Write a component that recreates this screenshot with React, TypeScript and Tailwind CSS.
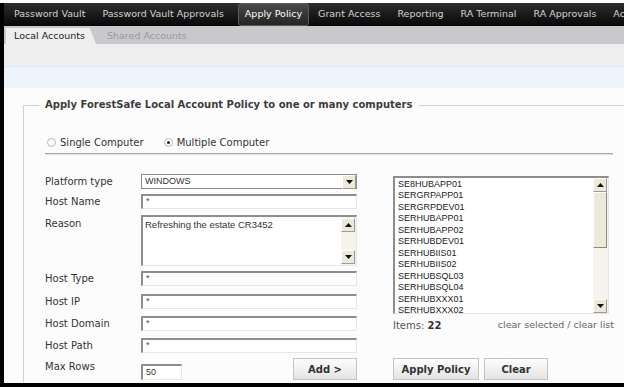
const navItems = [
  "Password Vault",
  "Password Vault Approvals",
  "Apply Policy",
  "Grant Access",
  "Reporting",
  "RA Terminal",
  "RA Approvals",
  "Access",
];

const hosts = [
  "SE8HUBAPP01",
  "SERGRPAPP01",
  "SERGRPDEV01",
  "SERHUBAPP01",
  "SERHUBAPP02",
  "SERHUBDEV01",
  "SERHUBIIS01",
  "SERHUBIIS02",
  "SERHUBSQL03",
  "SERHUBSQL04",
  "SERHUBXXX01",
  "SERHUBXXX02",
];

const sunken =
  "border border-t-2 border-l-2 border-t-[#8d8d8d] border-l-[#8d8d8d] border-r-[#e6e6e6] border-b-[#e6e6e6] bg-white";

const Arrow = ({ up }: { up?: boolean }) => (
  <div className="flex h-[14px] w-[14px] items-center justify-center border border-t-white border-l-white border-r-[#9a9a9a] border-b-[#9a9a9a] bg-[#ece9d8]">
    <svg width="7" height="4" viewBox="0 0 7 4">
      <path d={up ? "M0 4 L3.5 0 L7 4 Z" : "M0 0 L3.5 4 L7 0 Z"} fill="#111" />
    </svg>
  </div>
);

const Radio = ({ checked }: { checked?: boolean }) => (
  <span className="flex h-[9px] w-[9px] items-center justify-center rounded-full border border-[#b5b5b5] bg-white">
    {checked && <span className="h-[3px] w-[3px] rounded-full bg-[#222]" />}
  </span>
);

const TextRow = ({ label, value, top }: { label: string; value: string; top: string }) => (
  <div className={`flex items-center ${top}`}>
    <span className="w-[96px]">{label}</span>
    <div className={`${sunken} flex h-[15px] w-[216px] items-center pl-[3px] font-['Liberation_Sans'] text-[9px] text-[#444]`}>
      {value}
    </div>
  </div>
);

const Button = ({ label, width }: { label: string; width: string }) => (
  <div
    className={`${width} flex h-[22px] items-center justify-center border border-[#c4c4c4] bg-gradient-to-b from-[#fdfdfd] to-[#e4e4e4] text-[10px] font-bold text-[#333]`}
  >
    {label}
  </div>
);

export default function App() {
  return (
    <div className="h-[387px] w-[628px] overflow-hidden bg-white pr-[4px] pt-[3px] font-['DejaVu_Sans',sans-serif]">
      <div className="flex h-full flex-col border-b-4 border-l-4 border-black bg-white">
        {/* main nav */}
        <div className="flex h-[23px] items-center overflow-hidden bg-gradient-to-b from-[#2e2e2e] to-[#080808] pl-[10px] text-[9.5px] whitespace-nowrap text-[#d2d2d2]">
          {navItems.map((n) =>
            n === "Apply Policy" ? (
              <span
                key={n}
                className="mr-[9px] ml-[-3px] rounded-[3px] border border-[#5a5a5a] bg-gradient-to-b from-[#4a4a4a] to-[#252525] px-[6px] py-[3px] text-white"
              >
                {n}
              </span>
            ) : (
              <span key={n} className="mr-[17px]">
                {n}
              </span>
            )
          )}
        </div>
        {/* sub tabs */}
        <div className="flex h-[18px] items-end bg-[#c9c9cd] pl-[2px] text-[9.5px]">
          <div className="flex h-[16px] w-[90px] items-center bg-[#eeeeee] pl-[8px] text-[#222] [clip-path:polygon(0_0,93%_0,100%_100%,0_100%)]">
            Local Accounts
          </div>
          <div className="flex h-[16px] items-center pl-[11px] text-[#999999]">Shared Accounts</div>
        </div>
        <div className="h-[22px] bg-[#eeeeee]" />
        <div className="h-[22px] border-t border-[#dfe6ee] bg-[#eef4fb]" />
        {/* content */}
        <div className="flex-1 overflow-hidden bg-[#fcfcfc] pl-[19px] pt-[10px] text-[10px] text-[#333]">
          <fieldset className="h-[400px] border-t border-l border-[#d0d0d0] pl-[15px]">
            <legend className="px-[6px] text-[10px] leading-[14px] font-bold text-[#3c3c3c]">
              Apply ForestSafe Local Account Policy to one or many computers
            </legend>
            <div className="pl-[6px]">
              <div className="mt-[23px] flex h-[14px] items-center gap-[4px] pl-[2px]">
                <Radio />
                <span className="mr-[16px]">Single Computer</span>
                <Radio checked />
                <span>Multiple Computer</span>
              </div>
              <div className="mt-[4px] h-[2px] w-[568px] border-t border-b border-t-[#a8a8a8] border-b-[#e0e0e0]" />

              <div className="mt-[19px] flex">
                {/* left form */}
                <div className="w-[312px]">
                  <div className="flex items-center">
                    <span className="w-[96px]">Platform type</span>
                    <div className="flex h-[15px] w-[216px] items-center justify-between border border-[#8d8d8d] bg-white pl-[3px] font-['Liberation_Sans'] text-[9px] text-[#333]">
                      WINDOWS
                      <Arrow />
                    </div>
                  </div>
                  <TextRow label="Host Name" value="*" top="mt-[5px]" />
                  <div className="mt-[6px] flex items-start">
                    <span className="w-[96px] pt-[1px]">Reason</span>
                    <div className={`${sunken} flex h-[51px] w-[216px] justify-between`}>
                      <span className="pl-[2px] pt-[1px] font-['Liberation_Sans'] text-[9.5px] text-[#333]">
                        Refreshing the estate CR3452
                      </span>
                      <div className="flex flex-col justify-between bg-[#f4f3ee] pr-[1px] pb-[1px] pt-[1px]">
                        <Arrow up />
                        <Arrow />
                      </div>
                    </div>
                  </div>
                  <TextRow label="Host Type" value="*" top="mt-[5px]" />
                  <TextRow label="Host IP" value="*" top="mt-[8px]" />
                  <TextRow label="Host Domain" value="*" top="mt-[7px]" />
                  <TextRow label="Host Path" value="*" top="mt-[7px]" />
                  <div className="mt-[5px] flex items-start">
                    <span className="w-[96px] pt-[1px]">Max Rows</span>
                    <div className={`${sunken} mt-[6px] flex h-[16px] w-[41px] items-center pl-[3px] font-['Liberation_Sans'] text-[9px] text-[#333]`}>
                      50
                    </div>
                    <div className="ml-auto">
                      <Button label="Add >" width="w-[64px]" />
                    </div>
                  </div>
                </div>
                {/* right list */}
                <div className="mt-[2px] ml-[36px] w-[221px]">
                  <div className={`${sunken} flex h-[138px] w-[216px]`}>
                    <div className="flex-1 pl-[3px] pt-[1px] font-['Liberation_Sans'] text-[9px] leading-[11.45px] text-[#222]">
                      {hosts.map((h) => (
                        <div key={h}>{h}</div>
                      ))}
                    </div>
                    <div className="flex w-[15px] flex-col bg-[#f4f3ee]">
                      <Arrow up />
                      <div className="h-[56px] w-[14px] border border-t-white border-l-white border-r-[#8a8a8a] border-b-[#8a8a8a] bg-[#ece9d8]" />
                      <div className="flex-1" />
                      <Arrow />
                    </div>
                  </div>
                  <div className="mt-[4px] flex items-center justify-between text-[#555]">
                    <span>
                      Items: <b className="text-[#333]">22</b>
                    </span>
                    <span className="text-[9.5px] text-[#666]">clear selected / clear list</span>
                  </div>
                  <div className="mt-[25px] flex gap-[5px]">
                    <Button label="Apply Policy" width="w-[86px]" />
                    <Button label="Clear" width="w-[64px]" />
                  </div>
                </div>
              </div>
            </div>
          </fieldset>
        </div>
      </div>
    </div>
  );
}
